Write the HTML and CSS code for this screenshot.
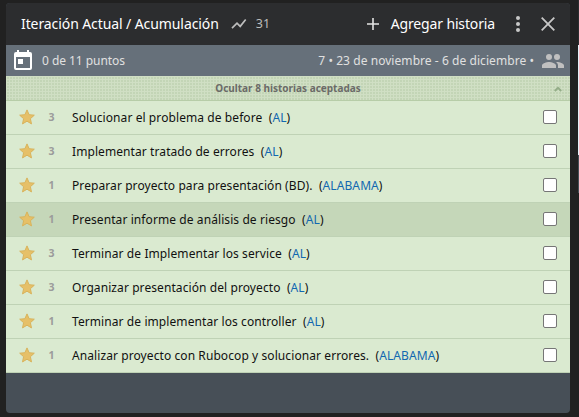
FILE: index.html
```html
<!DOCTYPE html>
<html lang="es">
<head>
<meta charset="utf-8">
<title>Iteración Actual</title>
<link rel="stylesheet" href="styles.css">
</head>
<body>
<svg width="0" height="0" class="defs"><symbol id="star" viewBox="0 0 16 16"><path d="M8 .9l2.100 4.800 5.200.5-3.900 3.500 1.100 5.200L8 12.200l-4.500 2.700 1.100-5.200L.7 6.200l5.200-.5z" fill="#e6c068" stroke="#d8b35c" stroke-width="1"/></symbol></svg>
<section class="panel">
  <header class="header">
    <h1 class="title">Iteración Actual / Acumulación</h1>
    <svg class="trend" viewBox="0 0 16 12"><path d="M1 10.200l5-5 3.200 3.200L14.700 1.500" fill="none" stroke="#bdbdbd" stroke-width="1.700"/></svg>
    <span class="velocity">31</span>
    <button class="add"><svg class="plus" viewBox="0 0 12 12"><path d="M6 0v12M0 6h12" stroke="#e4e4e4" stroke-width="1.600"/></svg><span>Agregar historia</span></button>
    <svg class="dots" viewBox="0 0 4 16"><g fill="#c8c8c8"><circle cx="2" cy="2" r="2"/><circle cx="2" cy="8" r="2"/><circle cx="2" cy="14" r="2"/></g></svg>
    <svg class="close" viewBox="0 0 14 14"><path d="M.7.7l12.600 12.600M13.300.7L.7 13.300" stroke="#c8c8c8" stroke-width="1.800"/></svg>
  </header>
  <div class="iteration">
    <svg class="calendar" viewBox="0 0 18 20"><path fill="#fff" fill-rule="evenodd" d="M3 0h2v2h8V0h2v2h1a2 2 0 0 1 2 2v14a2 2 0 0 1-2 2H2a2 2 0 0 1-2-2V4a2 2 0 0 1 2-2h1zM2 7v11h14V7zM4 9h5v5H4z"/></svg>
    <span class="points">0 de 11 puntos</span>
    <span class="dates">7 • 23 de noviembre - 6 de diciembre •</span>
    <svg class="people" viewBox="0 0 22 14"><path fill="#c0c0c0" d="M15 6a3 3 0 1 0 0-6 3 3 0 0 0 0 6zM7 6a3 3 0 1 0 0-6 3 3 0 0 0 0 6zM7 8c-2.300 0-7 1.200-7 3.500V14h14v-2.500C14 9.200 9.300 8 7 8zM15 8l-1 .05c1.200.85 2 2 2 3.450V14h6v-2.500C22 9.200 17.300 8 15 8z"/></svg>
  </div>
  <div class="toggle"><span>Ocultar 8 historias aceptadas</span><svg class="chevron" viewBox="0 0 8 6"><path d="M.8 5L4 1.800 7.200 5" fill="none" stroke="#94ad88" stroke-width="2"/></svg></div>
  <ul class="stories">
    <li class="story"><svg class="star"><use href="#star"/></svg><b class="estimate">3</b><span class="name">Solucionar el problema de before&nbsp; (<a>AL</a>)</span><i class="check"></i></li>
    <li class="story"><svg class="star"><use href="#star"/></svg><b class="estimate">3</b><span class="name">Implementar tratado de errores&nbsp; (<a>AL</a>)</span><i class="check"></i></li>
    <li class="story"><svg class="star"><use href="#star"/></svg><b class="estimate">1</b><span class="name">Preparar proyecto para presentación (BD).&nbsp; (<a>ALABAMA</a>)</span><i class="check"></i></li>
    <li class="story hover"><svg class="star"><use href="#star"/></svg><b class="estimate">1</b><span class="name">Presentar informe de análisis de riesgo&nbsp; (<a>AL</a>)</span><i class="check"></i></li>
    <li class="story"><svg class="star"><use href="#star"/></svg><b class="estimate">3</b><span class="name">Terminar de Implementar los service&nbsp; (<a>AL</a>)</span><i class="check"></i></li>
    <li class="story"><svg class="star"><use href="#star"/></svg><b class="estimate">3</b><span class="name">Organizar presentación del proyecto&nbsp; (<a>AL</a>)</span><i class="check"></i></li>
    <li class="story"><svg class="star"><use href="#star"/></svg><b class="estimate">1</b><span class="name">Terminar de implementar los controller&nbsp; (<a>AL</a>)</span><i class="check"></i></li>
    <li class="story"><svg class="star"><use href="#star"/></svg><b class="estimate">1</b><span class="name">Analizar proyecto con Rubocop y solucionar errores.&nbsp; (<a>ALABAMA</a>)</span><i class="check"></i></li>
  </ul>
</section>
<aside class="next"><div class="next-head"></div><div class="next-list"></div><div class="next-body"></div></aside>
</body>
</html>
```
FILE: styles.css
```css
* { box-sizing: border-box; }
body { margin: 0; height: 417px; padding: 3px 0 4px 6px; background: #212121; display: flex; gap: 8px; overflow: hidden; font-family: "Noto Sans", "Open Sans", sans-serif; font-size: 13px; }
.defs { position: absolute; }
svg { flex: none; display: block; }
.panel { width: 564px; height: 410px; flex: none; border-radius: 4px; overflow: hidden; background: #474f57; }
.header { height: 42px; display: flex; align-items: center; padding: 0 15px 1px; background: #2c2d2f; color: #fff; }
.title { margin: 0; font-size: 14px; font-weight: 400; letter-spacing: -.09px; white-space: nowrap; }
.trend { width: 16px; height: 12px; margin-left: 12px; }
.velocity { margin-left: 9px; color: #bdbdbd; font-size: 12.5px; }
.add { margin: 0 0 0 auto; padding: 0; border: 0; background: none; color: #fff; font: inherit; font-size: 14px; letter-spacing: -.14px; display: flex; align-items: center; gap: 12px; white-space: nowrap; }
.plus { width: 12px; height: 12px; }
.dots { width: 4px; height: 16px; margin-left: 21px; }
.close { width: 14px; height: 14px; margin-left: 21px; }
.iteration { height: 31px; display: flex; align-items: center; padding: 0 6px 0 8px; background: #66707a; color: #e0e0e0; font-size: 12px; }
.calendar { width: 18px; height: 20px; margin-bottom: 1px; }
.points { margin-left: 10px; letter-spacing: -.05px; }
.dates { margin-left: auto; letter-spacing: .06px; }
.people { width: 22px; height: 14px; margin-left: 8px; }
.toggle { height: 25px; display: flex; align-items: center; justify-content: center; position: relative; border-bottom: 1px solid #b7cda8; background-color: #c3d5b6; background-image: linear-gradient(#d0dfc4 1px, transparent 1px), linear-gradient(90deg, #d0dfc4 1px, transparent 1px); background-size: 3px 3px; color: #6b6b68; font-size: 10px; font-weight: 700; }
.chevron { position: absolute; right: 8px; top: 10px; width: 8px; height: 6px; }
.stories { margin: 0; padding: 0; list-style: none; }
.story { height: 34px; display: flex; align-items: center; padding: 0 13px 1px 12.5px; background: #daead0; border-bottom: 1px solid #bfd2b5; color: #111; white-space: nowrap; }
.story.hover { background: #c5d7b9; }
.star { width: 16px; height: 16px; }
.estimate { width: 37.5px; padding-left: 14px; color: #9b9b9b; font-size: 10.5px; }
.name { font-size: 12px; letter-spacing: .085px; }
.name a { color: #1168b0; }
.check { width: 14px; height: 14px; margin-left: auto; background: #fff; border: 1px solid #767676; border-radius: 2px; }
.next { width: 1px; margin: -3px 0 -4px; }
.next-head { height: 45px; background: #2c2d2f; }
.next-list { height: 110px; background: #e4eff7; }
.next-body { height: 38px; background: #474f57; }
```
